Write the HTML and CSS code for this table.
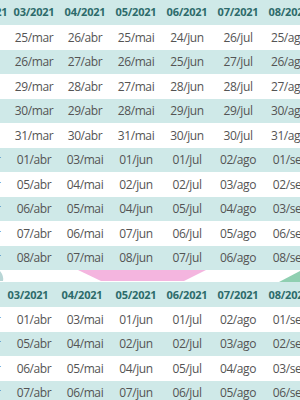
FILE: index.html
```html
<!DOCTYPE html>
<html lang="pt">
<head>
<meta charset="utf-8">
<link rel="stylesheet" href="styles.css">
</head>
<body>
<div class="page">
  <div class="tbl">
    <div class="row head teal top-head"><span>02/2021</span><span>03/2021</span><span>04/2021</span><span>05/2021</span><span>06/2021</span><span>07/2021</span><span>08/2021</span></div>
    <div class="row"><span>24/fev</span><span>25/mar</span><span>26/abr</span><span>25/mai</span><span>24/jun</span><span>26/jul</span><span>25/ago</span></div>
    <div class="row teal"><span>25/fev</span><span>26/mar</span><span>27/abr</span><span>26/mai</span><span>25/jun</span><span>27/jul</span><span>26/ago</span></div>
    <div class="row"><span>26/fev</span><span>29/mar</span><span>28/abr</span><span>27/mai</span><span>28/jun</span><span>28/jul</span><span>27/ago</span></div>
    <div class="row teal"><span>27/fev</span><span>30/mar</span><span>29/abr</span><span>28/mai</span><span>29/jun</span><span>29/jul</span><span>30/ago</span></div>
    <div class="row"><span>28/fev</span><span>31/mar</span><span>30/abr</span><span>31/mai</span><span>30/jun</span><span>30/jul</span><span>31/ago</span></div>
    <div class="row teal"><span>01/mar</span><span>01/abr</span><span>03/mai</span><span>01/jun</span><span>01/jul</span><span>02/ago</span><span>01/set</span></div>
    <div class="row"><span>02/mar</span><span>05/abr</span><span>04/mai</span><span>02/jun</span><span>02/jul</span><span>03/ago</span><span>02/set</span></div>
    <div class="row teal"><span>03/mar</span><span>06/abr</span><span>05/mai</span><span>04/jun</span><span>05/jul</span><span>04/ago</span><span>03/set</span></div>
    <div class="row"><span>04/mar</span><span>07/abr</span><span>06/mai</span><span>07/jun</span><span>06/jul</span><span>05/ago</span><span>06/set</span></div>
    <div class="row teal"><span>05/mar</span><span>08/abr</span><span>07/mai</span><span>08/jun</span><span>07/jul</span><span>06/ago</span><span>08/set</span></div>
  </div>
  <div class="sep">
    <svg width="300" height="12" viewBox="0 0 300 12">
      <rect width="300" height="12" fill="#ffffff"/>
      <path d="M0 1 Q4 6 3 11 L0 11 Z" fill="#b9d6d6"/>
      <polygon points="78,0 206,0 184,11 101,11" fill="#f4b5df"/>
      <polygon points="279,12 300,1 300,12" fill="#8fcfb1"/>
    </svg>
  </div>
  <div class="tbl">
    <div class="row head teal bottom-head"><span class="sh12">02/2021</span><span class="sh6">03/2021</span><span class="sh3">04/2021</span><span>05/2021</span><span>06/2021</span><span>07/2021</span><span>08/2021</span></div>
    <div class="row"><span>01/mar</span><span>01/abr</span><span>03/mai</span><span>01/jun</span><span>01/jul</span><span>02/ago</span><span>01/set</span></div>
    <div class="row teal"><span>02/mar</span><span>05/abr</span><span>04/mai</span><span>02/jun</span><span>02/jul</span><span>03/ago</span><span>02/set</span></div>
    <div class="row"><span>03/mar</span><span>06/abr</span><span>05/mai</span><span>04/jun</span><span>05/jul</span><span>04/ago</span><span>03/set</span></div>
    <div class="row teal"><span>04/mar</span><span>07/abr</span><span>06/mai</span><span>07/jun</span><span>06/jul</span><span>05/ago</span><span>06/set</span></div>
  </div>
</div>
</body>
</html>
```
FILE: styles.css
```css
html, body {
  margin: 0;
  padding: 0;
  background: #ffffff;
}
body {
  width: 300px;
  height: 400px;
  overflow: hidden;
  font-family: "Open Sans", "DejaVu Sans", sans-serif;
}
.page {
  width: 300px;
  height: 400px;
  overflow: hidden;
}
.tbl {
  margin-left: -42.5px;
  width: 357px;
}
.row {
  display: grid;
  grid-template-columns: repeat(7, 51px);
  height: 24.5px;
  align-items: center;
  font-size: 12px;
  color: #545454;
  letter-spacing: -0.4px;
}
.row > span {
  text-align: center;
  white-space: nowrap;
}
.row > span:first-child {
  transform: translateX(-2px);
}
.top-head > span:first-child {
  transform: translateX(4px);
}
.teal {
  background: #cfe9e8;
}
.head {
  height: 25px;
  font-weight: 700;
  font-size: 11px;
  color: #2d6b6b;
  letter-spacing: -0.2px;
}
.top-head {
  padding-bottom: 3px;
  box-sizing: border-box;
}
.bottom-head {
  padding-bottom: 1px;
  box-sizing: border-box;
}
.row > span.sh12 {
  transform: translateX(-14px);
}
.sh6 {
  transform: translateX(-6px);
}
.sh3 {
  transform: translateX(-3px);
}
.sep {
  height: 12px;
  line-height: 0;
}
.sep svg {
  display: block;
}
```
